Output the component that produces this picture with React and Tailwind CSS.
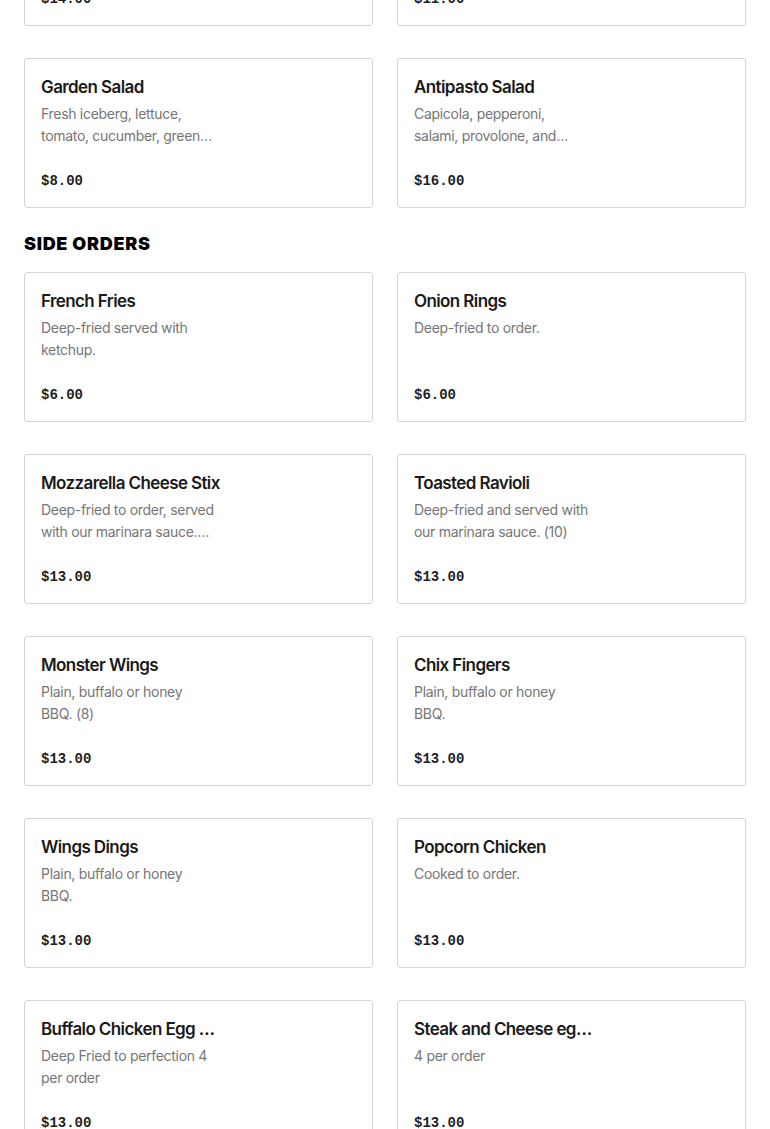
import React from 'react';

const topRow = [
  { id: 'prev1', name: 'Chef Salad', desc: 'Ham, turkey, cheese, egg, tomato and cucumber.', price: '$14.00' },
  { id: 'prev2', name: 'Greek Salad', desc: 'Feta, olives, onion, tomato and cucumber.', price: '$11.00' },
];

const salads = [
  { id: 'garden', name: 'Garden Salad', desc: 'Fresh iceberg, lettuce, tomato, cucumber, green peppers and onion.', price: '$8.00' },
  { id: 'antipasto', name: 'Antipasto Salad', desc: 'Capicola, pepperoni, salami, provolone, and mixed greens.', price: '$16.00' },
];

const sideOrders = [
  { id: 'fries', name: 'French Fries', desc: 'Deep-fried served with ketchup.', price: '$6.00' },
  { id: 'rings', name: 'Onion Rings', desc: 'Deep-fried to order.', price: '$6.00' },
  { id: 'stix', name: 'Mozzarella Cheese Stix', desc: 'Deep-fried to order, served with our marinara sauce. (8)', price: '$13.00' },
  { id: 'ravioli', name: 'Toasted Ravioli', desc: 'Deep-fried and served with our marinara sauce. (10)', price: '$13.00' },
  { id: 'wings', name: 'Monster Wings', desc: 'Plain, buffalo or honey BBQ. (8)', price: '$13.00' },
  { id: 'fingers', name: 'Chix Fingers', desc: 'Plain, buffalo or honey BBQ.', price: '$13.00' },
  { id: 'dings', name: 'Wings Dings', desc: 'Plain, buffalo or honey BBQ.', price: '$13.00' },
  { id: 'popcorn', name: 'Popcorn Chicken', desc: 'Cooked to order.', price: '$13.00' },
  { id: 'eggrolls', name: 'Buffalo Chicken Egg Rolls', desc: 'Deep Fried to perfection 4 per order', price: '$13.00' },
  { id: 'steak', name: 'Steak and Cheese egg rolls', desc: '4 per order', price: '$13.00' },
];

const MenuCard = ({ item }) => (
  <div className="bg-white border border-[#d4d4d4] rounded-[3px] h-[150px] px-4 pt-4 pb-4 flex flex-col">
    <h3 className="w-[182px] truncate text-[17px] leading-6 font-semibold text-[#1a1a1a] tracking-[-0.6px]">
      {item?.name}
    </h3>
    <p className="w-[176px] mt-1 h-[44px] text-[14px] leading-[22px] text-[#767676] tracking-[-0.3px] line-clamp-2">
      {item?.desc}
    </p>
    <div className="mt-auto font-['Liberation_Mono',monospace] font-bold text-[14px] leading-5 text-[#1f1f1f]">
      {item?.price}
    </div>
  </div>
);

const CardGrid = ({ items }) => (
  <div className="grid grid-cols-2 gap-x-6 gap-y-8">
    {items?.map((item) => (
      <MenuCard key={item?.id} item={item} />
    ))}
  </div>
);

export default function App() {
  return (
    <div className="bg-white min-h-screen font-['Inter','Noto_Sans',sans-serif] overflow-hidden h-[1129px]">
      <div className="px-6 -mt-[124px]">
        <div className="flex flex-col gap-8">
          <CardGrid items={topRow} />
          <CardGrid items={salads} />
        </div>
        <h2 className="mt-6 mb-4 text-[18px] leading-6 font-black tracking-[0.7px] text-black uppercase">
          Side Orders
        </h2>
        <CardGrid items={sideOrders} />
      </div>
    </div>
  );
}
